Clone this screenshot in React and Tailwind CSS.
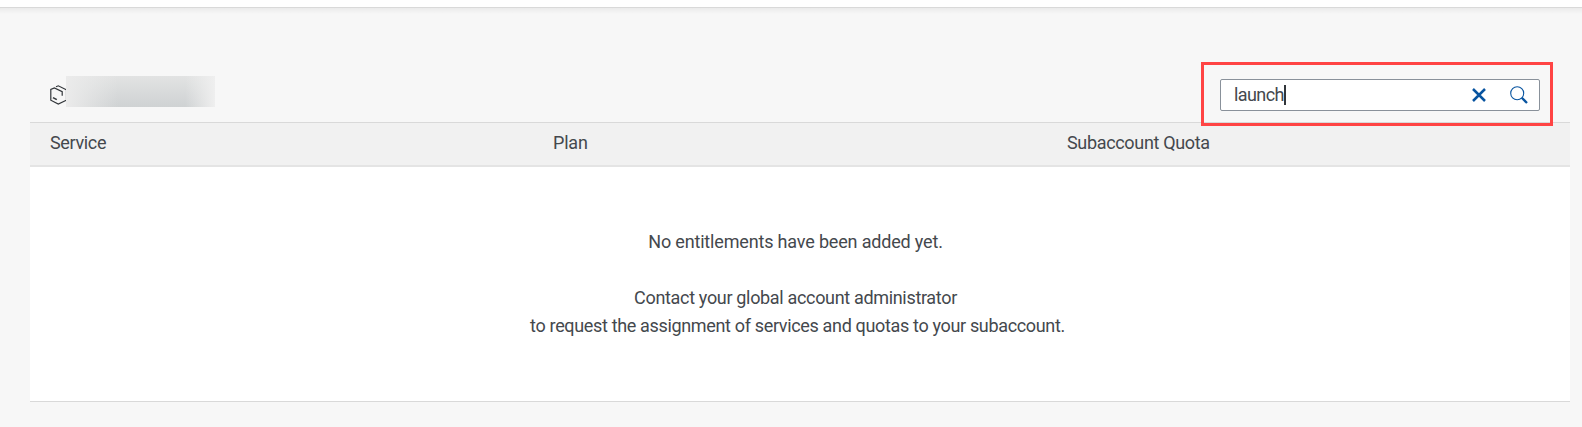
function SubaccountIcon() {
  return (
    <svg className="block h-[20px] w-[19px] shrink-0" viewBox="0 0 19 20" fill="none" stroke="#32363a" strokeWidth="1.2">
      <path d="M6 1.8 8.3 .8 16.5 4.8V15.2L8.3 19 .8 15.2V4.4L4.4 2.9 12.2 6.6V10.8" />
      <path d="M3 12.6 6.8 14.6" strokeWidth="1.6" />
    </svg>
  );
}

function SearchField() {
  return (
    <div className="h-16 w-[352px] border-3 border-[#ff4444] px-4 py-[14px]">
      <div className="flex h-8 w-80 items-center rounded-[2px] border border-[#89919a] bg-white pl-[13px]">
        <span className="w-[50px] text-[18px] leading-7 tracking-[-0.6px]">launch</span>
        <span className="h-5 w-[2px] bg-[#32363a]" />
        <svg className="ml-auto mr-6 h-[14px] w-[14px]" viewBox="0 0 14 14" stroke="#0854a0" strokeWidth="2.5">
          <path d="M1 1 13 13M13 1 1 13" />
        </svg>
        <svg className="mr-[11px] h-[18px] w-[18px]" viewBox="0 0 18 18" fill="none" stroke="#0854a0">
          <circle cx="7.2" cy="7.2" r="6.5" strokeWidth="1.1" />
          <path d="M11.8 11.8 17 17" strokeWidth="2.3" />
        </svg>
      </div>
    </div>
  );
}

export default function App() {
  return (
    <div className="flex h-[427px] w-[1582px] flex-col overflow-hidden bg-[#f7f7f7] font-['Roboto',sans-serif] text-[#44484d]">
      <div className="h-2 shrink-0 border-b border-[#d9d9d9] bg-white" />
      <div className="h-[6px] shrink-0 bg-linear-to-b from-[#ebebeb] to-[#f7f7f7]" />
      <main className="ml-[30px] flex w-[1540px] flex-col pt-12">
        <div className="relative z-10 -mb-1 flex h-16 items-start justify-between pl-5 pr-[17px]">
          <div className="flex pt-[14px]">
            <div className="mt-[9px] w-4 overflow-hidden">
              <SubaccountIcon />
            </div>
            <div className="h-[31px] w-[149px] bg-linear-to-b from-[#e2e3e3] to-[#cfd2d3]">
              <div className="h-full w-full bg-linear-to-r from-[#ebebeb] via-transparent via-35% to-transparent">
                <div className="h-full w-full bg-linear-to-r from-transparent from-80% to-[#efefef]" />
              </div>
            </div>
          </div>
          <SearchField />
        </div>
        <div className="flex h-[45px] items-center border-t border-b-2 border-t-[#d9d9d9] border-b-[#e4e4e4] bg-[#f1f1f1] pb-[2px] pl-5 text-[18px] leading-7">
          <span className="w-[503px] tracking-[-0.35px]">Service</span>
          <span className="w-[514px] tracking-[-0.2px]">Plan</span>
          <span className="tracking-[-0.33px]">Subaccount Quota</span>
        </div>
        <div className="flex h-[235px] flex-col items-center border-b border-[#d9d9d9] bg-white pr-[9px] pt-[61px] text-[18px] leading-7">
          <p className="tracking-[-0.17px]">No entitlements have been added yet.</p>
          <p className="mt-7 tracking-[-0.33px]">Contact your global account administrator</p>
          <p className="ml-1 tracking-[-0.34px]">to request the assignment of services and quotas to your subaccount.</p>
        </div>
      </main>
    </div>
  );
}
